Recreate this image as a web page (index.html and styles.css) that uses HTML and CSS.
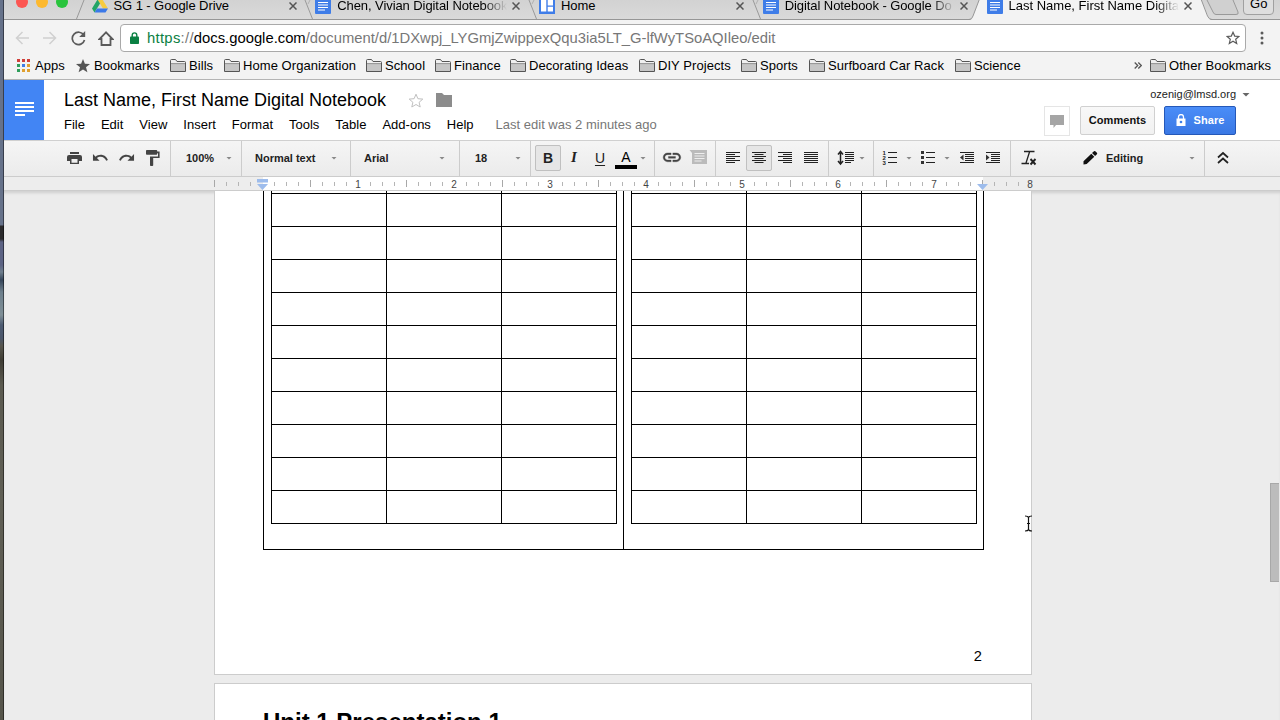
FILE: index.html
```html
<!DOCTYPE html>
<html lang="en">
<head>
  <meta charset="UTF-8" />
  <meta name="viewport" content="width=device-width, initial-scale=1.0">
  <title>Last Name, First Name Digital Notebook</title>
  <link rel="stylesheet" href="styles.css">
</head>
<body>
  <!-- Shared icons -->
  <svg class="sprite" aria-hidden="true">
    <symbol id="docs" viewBox="0 0 16 16">
      <rect width="16" height="16" rx="1" fill="#3f7de8"/>
      <path d="M3 4.5h10M3 7h10M3 9.5h10M3 12h7" stroke="#fff" stroke-width="1.2"/>
    </symbol>
    <symbol id="close" viewBox="0 0 8 8">
      <path d="M.5.5l7 7M7.5.5l-7 7" stroke="#555" stroke-width="1.5"/>
    </symbol>
    <symbol id="folder" viewBox="0 0 16 13">
      <path d="M.5 12.5V1.5q0-1 1-1h4l1.5 2h7.5q1 0 1 1v9z" fill="#f0f0f0" stroke="#555"/>
      <path d="M1 5h14v7H1z" fill="#c6c6c6"/>
      <path d="M1 4.6h14" stroke="#777" stroke-width=".8"/>
    </symbol>
  </svg>

  <div class="desktop"></div>
  <div class="window">

    <div class="tabstrip">
      <svg class="tab-edges" viewBox="4 0 1276 20">
        <path d="M4 19.5H1280" stroke="#969696"/>
        <g fill="none" stroke="#999">
          <path d="M84 0L76.500 19M305 0L312.500 19M529 0L536.500 19M753 0L760.500 19"/>
          <path d="M310 0l-2 4M534 0l-2 4M758 0l-2 4" stroke="#b0b0b0"/>
          <path d="M1207 0l6 12q1 2.500 3 2.500h20q3 0 2-2.500L1233 0" fill="#d0d0d0"/>
        </g>
        <path d="M979.500 -1L973 16q-1 4-4 4h243q-3 0-4-4L1201-1z" fill="#f3f3f3"/>
        <path d="M979.500 -1L973 16q-1 3.500-4 3.500M1201-1l6.500 17q1.500 3.500 4.500 3.500" fill="none" stroke="#969696"/>
      </svg>
      <div class="lights"><i class="red"></i><i class="yellow"></i><i class="green"></i></div>
      <div class="tab">
        <svg width="16" height="16" viewBox="0 0 16 16">
          <path d="M5.500 1.500h5L16 10.500h-5z" fill="#f7cb3e"/>
          <path d="M5.500 1.500L0 10.500l2.500 4L8 5.500z" fill="#23a566"/>
          <path d="M5 10.500h11l-2.500 4h-11z" fill="#3b79e8"/>
        </svg>
        <span>SG 1 - Google Drive</span>
        <svg class="x"><use href="#close"/></svg>
      </div>
      <div class="tab fade">
        <svg width="16" height="16"><use href="#docs"/></svg>
        <span>Chen, Vivian Digital Notebook</span>
        <svg class="x"><use href="#close"/></svg>
      </div>
      <div class="tab">
        <svg width="16" height="16" viewBox="0 0 16 16">
          <rect width="16" height="16" fill="#3f7de8"/>
          <path d="M2 2h5.300v11.500H2zM8.700 2H14v5.500H8.700zM8.700 8.700H14v4.800H8.700z" fill="#fff"/>
        </svg>
        <span>Home</span>
        <svg class="x"><use href="#close"/></svg>
      </div>
      <div class="tab fade">
        <svg width="16" height="16"><use href="#docs"/></svg>
        <span>Digital Notebook - Google Do</span>
        <svg class="x"><use href="#close"/></svg>
      </div>
      <div class="tab fade active">
        <svg width="16" height="16"><use href="#docs"/></svg>
        <span>Last Name, First Name Digital</span>
        <svg class="x"><use href="#close"/></svg>
      </div>
      <div class="profile">Go</div>
    </div>

    <div class="navbar">
      <svg class="nav-icon" width="14" height="14" viewBox="0 0 14 14"><path d="M14 7H1.500M7.500 1L1.500 7l6 6" stroke="#d0d0d0" stroke-width="1.500"/></svg>
      <svg class="nav-icon" width="14" height="14" viewBox="0 0 14 14"><path d="M0 7h12.500M6.500 1l6 6-6 6" stroke="#d0d0d0" stroke-width="1.500"/></svg>
      <svg class="nav-icon" width="15" height="15" viewBox="0 0 15 15"><path d="M12.800 4.200A6.200 6.200 0 1 0 13.500 9" stroke="#5a5a5a" stroke-width="1.700"/><path d="M14.200 0v6H8.200z" fill="#5a5a5a"/></svg>
      <svg class="nav-icon" width="16" height="15" viewBox="0 0 16 15"><path d="M8 1.400L1.500 8H3.500v6h9V8h2z" stroke="#5a5a5a" stroke-width="1.800"/></svg>
      <div class="omnibox">
        <svg width="9" height="12" viewBox="0 0 9 12"><rect y="4.500" width="9" height="7.500" rx=".8" fill="#0b8043"/><path d="M2.200 5V3.200a2.300 2.300 0 0 1 4.600 0V5" fill="none" stroke="#0b8043" stroke-width="1.400"/></svg>
        <div class="url"><span class="scheme">https</span><span class="sep">://</span><span class="host">docs.google.com</span>/document/d/1DXwpj_LYGmjZwippexQqu3ia5LT_G-lfWyTSoAQIleo/edit</div>
        <svg class="fav" width="14" height="14" viewBox="0 0 14 14"><path d="M7 1.300l1.700 3.800 4.200.4-3.200 2.800 1 4.100L7 10.200l-3.700 2.200 1-4.100L1.100 5.500l4.200-.4z" fill="none" stroke="#5a5a5a" stroke-width="1.200"/></svg>
      </div>
      <svg class="more" width="4" height="14" viewBox="0 0 4 14"><circle cx="2" cy="2" r="1.500"/><circle cx="2" cy="7" r="1.500"/><circle cx="2" cy="12" r="1.500"/></svg>
    </div>

    <div class="bookmarks">
      <a class="apps"><svg width="13" height="13" viewBox="0 0 13 13">
        <path d="M0 0h3v3H0zM5 0h3v3H5zM10 0h3v3h-3z" fill="#d0403a"/>
        <path d="M0 5h3v3H0z" fill="#2f9e5b"/><path d="M5 5h3v3H5z" fill="#3f7de8"/><path d="M10 5h3v3h-3z" fill="#e0a030"/>
        <path d="M0 10h3v3H0z" fill="#2f9e5b"/><path d="M5 10h3v3H5zM10 10h3v3h-3z" fill="#e0a030"/>
      </svg>Apps</a>
      <a class="starred"><svg width="14" height="14" viewBox="0 0 14 14"><path d="M7 0l1.900 4.800 5.100.3-4 3.200 1.400 5L7 10.500l-4.400 2.800 1.400-5-4-3.200 5.100-.3z" fill="#555"/></svg>Bookmarks</a>
      <a><svg width="16" height="13"><use href="#folder"/></svg>Bills</a>
      <a><svg width="16" height="13"><use href="#folder"/></svg>Home Organization</a>
      <a><svg width="16" height="13"><use href="#folder"/></svg>School</a>
      <a><svg width="16" height="13"><use href="#folder"/></svg>Finance</a>
      <a><svg width="16" height="13"><use href="#folder"/></svg>Decorating Ideas</a>
      <a><svg width="16" height="13"><use href="#folder"/></svg>DIY Projects</a>
      <a><svg width="16" height="13"><use href="#folder"/></svg>Sports</a>
      <a><svg width="16" height="13"><use href="#folder"/></svg>Surfboard Car Rack</a>
      <a><svg width="16" height="13"><use href="#folder"/></svg>Science</a>
      <svg width="8" height="7" viewBox="0 0 8 7"><path d="M.7.500l3 3-3 3M4.300.500l3 3-3 3" fill="none" stroke="#555" stroke-width="1.300"/></svg>
      <a><svg width="16" height="13"><use href="#folder"/></svg>Other Bookmarks</a>
    </div>

    <header class="doc-header">
      <div class="doc-home">
        <svg width="19" height="14" viewBox="0 0 19 14"><path d="M0 1h19M0 5h19M0 9h19M0 13h10" stroke="#fff" stroke-width="1.800"/></svg>
      </div>
      <div class="doc-info">
        <div class="title-row">
          <h1>Last Name, First Name Digital Notebook</h1>
          <svg class="title-star" width="16" height="15" viewBox="0 0 16 15"><path d="M8 1.200l1.900 4.500 4.900.4-3.700 3.200 1.100 4.700L8 11.500 3.800 14l1.100-4.700L1.200 6.100l4.900-.4z" fill="none" stroke="#c0c0c0"/></svg>
          <svg width="16" height="14" viewBox="0 0 16 14"><path d="M0 0h6l2 2h8v12H0z" fill="#8c8c8c"/></svg>
        </div>
        <nav class="menu">
          <span>File</span><span>Edit</span><span>View</span><span>Insert</span><span>Format</span><span>Tools</span><span>Table</span><span>Add-ons</span><span>Help</span><span class="saved">Last edit was 2 minutes ago</span>
        </nav>
      </div>
      <div class="account">
        <div class="email">ozenig@lmsd.org <i class="caret dark"></i></div>
        <div class="actions">
          <div class="chat"><svg width="14" height="13" viewBox="0 0 14 13"><path d="M0 0h14v10H6l-2.500 3v-3H0z" fill="#a5a5a5"/></svg></div>
          <button class="btn">Comments</button>
          <button class="btn share">
            <svg width="10" height="12" viewBox="0 0 10 12"><path d="M.5 4.500h9V12h-9z" fill="#fff"/><path d="M2.500 5V3a2.500 2.500 0 0 1 5 0v2" fill="none" stroke="#fff" stroke-width="1.300"/><circle cx="5" cy="8" r="1.300" fill="#3d7fe8"/></svg>
            Share
          </button>
        </div>
      </div>
    </header>

    <div class="toolbar">
      <div class="group g-main">
        <svg class="ic" viewBox="0 0 26 26"><path d="M9 7h9v2H9zM8 10h11q2 0 2 2v4h-3v3H9v-3H6v-4q0-2 2-2zm2.500 4v3.700h6V14z" fill="#444" fill-rule="evenodd"/></svg>
        <svg class="ic" viewBox="0 0 26 26"><path transform="translate(4.500 4) scale(.73)" d="M12.500 8c-2.650 0-5.050.99-6.900 2.600L2 7v9h9l-3.620-3.620c1.390-1.160 3.160-1.880 5.120-1.880 3.540 0 6.550 2.310 7.600 5.500l2.370-.78C21.080 11.030 17.150 8 12.500 8z" fill="#444"/></svg>
        <svg class="ic" viewBox="0 0 26 26"><path transform="translate(22.500 4) scale(-.73 .73)" d="M12.500 8c-2.650 0-5.050.99-6.900 2.600L2 7v9h9l-3.620-3.620c1.390-1.160 3.160-1.880 5.120-1.880 3.540 0 6.550 2.310 7.600 5.500l2.370-.78C21.080 11.030 17.150 8 12.500 8z" fill="#444"/></svg>
        <svg class="ic" viewBox="0 0 26 26"><path transform="translate(3.800 3.400) scale(.8)" d="M18 4V3c0-.55-.45-1-1-1H5c-.55 0-1 .45-1 1v4c0 .55.450 1 1 1h12c.55 0 1-.45 1-1V6h1v4H9v11c0 .55.450 1 1 1h2c.55 0 1-.45 1-1v-9h8V4h-3z" fill="#444"/></svg>
      </div>
      <div class="group drop g-zoom">100%<i class="caret"></i></div>
      <div class="group drop g-style">Normal text<i class="caret"></i></div>
      <div class="group drop g-font">Arial<i class="caret"></i></div>
      <div class="group drop g-size">18<i class="caret"></i></div>
      <div class="group g-text">
        <span class="ic on letter bold">B</span>
        <span class="ic letter italic">I</span>
        <span class="ic letter underline">U</span>
        <span class="ic letter color">A</span>
        <i class="caret"></i>
      </div>
      <div class="group g-insert">
        <svg class="ic" viewBox="0 0 26 26"><path transform="translate(2.400 1.800) scale(.88)" d="M3.900 12c0-1.710 1.390-3.100 3.100-3.100h4V7H7c-2.760 0-5 2.240-5 5s2.240 5 5 5h4v-1.900H7c-1.710 0-3.100-1.390-3.100-3.100zM8 13h8v-2H8v2zm9-6h-4v1.900h4c1.710 0 3.100 1.390 3.100 3.100s-1.390 3.100-3.100 3.100h-4V17h4c2.760 0 5-2.240 5-5s-2.240-5-5-5z" fill="#444" stroke="#444" stroke-width=".4"/></svg>
        <svg class="ic" viewBox="0 0 26 26"><path d="M3.500 5H21v14H6V8z" fill="#bbb"/><path d="M8.500 8.500h10M8.500 11h10M8.500 13.500h10M8.500 16h7" stroke="#eee"/></svg>
      </div>
      <div class="group g-align">
        <svg class="ic" viewBox="0 0 26 26"><path d="M6 7.500h14M6 9.500h9M6 11.500h14M6 13.500h9M6 15.500h14M6 17.500h9"/></svg>
        <svg class="ic on" viewBox="0 0 26 26"><path d="M6 7.500h14M8.500 9.500h9M6 11.500h14M8.500 13.500h9M6 15.500h14M8.500 17.500h9"/></svg>
        <svg class="ic" viewBox="0 0 26 26"><path d="M6 7.500h14M11 9.500h9M6 11.500h14M11 13.500h9M6 15.500h14M11 17.500h9"/></svg>
        <svg class="ic" viewBox="0 0 26 26"><path d="M6 7.500h14M6 9.500h14M6 11.500h14M6 13.500h14M6 15.500h14M6 17.500h14"/></svg>
      </div>
      <div class="group g-spacing">
        <svg class="ic" viewBox="0 0 26 26"><path d="M12 7.500h9M12 9.500h9M12 11.500h9M12 13.500h9M12 15.500h9M12 17.500h6"/><path d="M7.500 8v10M5 9.500l2.500-3 2.500 3M5 16l2.500 3 2.500-3" fill="none" stroke-width="1.500"/></svg>
        <i class="caret"></i>
      </div>
      <div class="group g-lists">
        <svg class="ic" viewBox="0 0 26 26"><path d="M11 7.500h9M11 12.500h9M11 17.500h9"/><g class="num"><text x="5.500" y="10">1</text><text x="5.500" y="15">2</text><text x="5.500" y="20">3</text></g></svg>
        <i class="caret"></i>
        <svg class="ic" viewBox="0 0 26 26"><path d="M11 7.500h9M11 12.500h9M11 17.500h9"/><path d="M6 6h3v3H6zM6 11h3v3H6zM6 16h3v3H6z" class="solid"/></svg>
        <i class="caret"></i>
        <svg class="ic outdent" viewBox="0 0 26 26"><path d="M6 7.500h14M11 9.500h9M11 11.500h9M11 13.500h9M11 15.500h9M6 17.500h14"/><path d="M9.500 9.500v6L6 12.500z" class="solid"/></svg>
        <svg class="ic" viewBox="0 0 26 26"><path d="M6 7.500h14M11 9.500h9M11 11.500h9M11 13.500h9M11 15.500h9M6 17.500h14"/><path d="M6 9.500v6l3.500-3z" class="solid"/></svg>
      </div>
      <div class="group g-mode">
        <svg class="ic" viewBox="0 0 26 26"><path d="M8 6.500h10.500M13.500 7l-3.500 11M5.500 18.500h7.500" stroke-width="1.300"/><path d="M14.500 14l5 5.500M19.500 14l-5 5.500" stroke-width="1.900"/></svg>
        <svg class="ic pencil" viewBox="0 0 26 26"><path d="M6.500 19.500v-3.200l7.800-7.600 3 3-7.600 7.300zM15 8l2-1.700q.8-.6 1.600.1l1.300 1.400q.7.800 0 1.500L18.100 11z" fill="#111" stroke="none"/></svg>
        <b>Editing</b>
        <i class="caret"></i>
      </div>
      <svg class="ic collapse" viewBox="0 0 26 26"><path d="M8 12.500l5-4.500 5 4.500M8 18l5-4.500 5 4.500" fill="none" stroke-width="1.700"/></svg>
    </div>

    <svg class="ruler" viewBox="4 0 1276 14">
      <defs>
        <pattern id="ticks" x="262" y="0" width="96" height="14" patternUnits="userSpaceOnUse">
          <path d="M12.500 5v4M24.500 5v4M36.500 5v4M60.500 5v4M72.500 5v4M84.500 5v4" stroke="#b5b5b5"/>
          <path d="M48.500 3v7" stroke="#a8a8a8"/>
        </pattern>
      </defs>
      <rect x="263" width="720" height="13" fill="#fff"/>
      <rect x="215" width="814" height="13" fill="url(#ticks)"/>
      <path d="M214.500 3v7" stroke="#a8a8a8"/>
      <g class="inches">
        <text x="358" y="10.500">1</text><text x="454" y="10.500">2</text><text x="550" y="10.500">3</text><text x="646" y="10.500">4</text>
        <text x="742" y="10.500">5</text><text x="838" y="10.500">6</text><text x="934" y="10.500">7</text><text x="1030" y="10.500">8</text>
      </g>
      <path d="M4 13.500h1276" stroke="#ccc"/>
      <path d="M257 2h11v3.500h-11zM257 7h11l-5.500 6zM977 7h11l-5.500 6z" fill="#9dbcec"/>
    </svg>

    <main class="canvas">
      <section class="page">
        <div class="outer">
          <div class="half">
            <table class="grid">
              <tr><td></td><td></td><td></td></tr>
              <tr><td></td><td></td><td></td></tr>
              <tr><td></td><td></td><td></td></tr>
              <tr><td></td><td></td><td></td></tr>
              <tr><td></td><td></td><td></td></tr>
              <tr><td></td><td></td><td></td></tr>
              <tr><td></td><td></td><td></td></tr>
              <tr><td></td><td></td><td></td></tr>
              <tr><td></td><td></td><td></td></tr>
              <tr><td></td><td></td><td></td></tr>
              <tr><td></td><td></td><td></td></tr>
            </table>
          </div>
          <div class="half">
            <table class="grid">
              <tr><td></td><td></td><td></td></tr>
              <tr><td></td><td></td><td></td></tr>
              <tr><td></td><td></td><td></td></tr>
              <tr><td></td><td></td><td></td></tr>
              <tr><td></td><td></td><td></td></tr>
              <tr><td></td><td></td><td></td></tr>
              <tr><td></td><td></td><td></td></tr>
              <tr><td></td><td></td><td></td></tr>
              <tr><td></td><td></td><td></td></tr>
              <tr><td></td><td></td><td></td></tr>
              <tr><td></td><td></td><td></td></tr>
            </table>
          </div>
        </div>
        <div class="page-number">2</div>
      </section>
      <section class="page next">
        <h2>Unit 1 Presentation 1</h2>
      </section>
      <div class="thumb"></div>
      <svg class="cursor" width="9" height="17" viewBox="0 0 9 17"><path d="M1 1q3 0 3.500 1.500Q5 1 8 1M4.500 2v13M1 16q3 0 3.500-1.500Q5 16 8 16M3 8.500h3" fill="none" stroke="#111" stroke-width="1.200"/></svg>
    </main>
  </div>
</body>
</html>
```
FILE: styles.css
```css
* {
  box-sizing: border-box;
}
html, body {
  margin: 0;
  padding: 0;
  width: 1280px;
  height: 720px;
  overflow: hidden;
  font-family: "Liberation Sans", Arial, sans-serif;
  font-size: 13px;
  color: #000;
}
body {
  display: flex;
}
svg {
  flex: none;
  display: block;
}
.sprite {
  position: absolute;
  width: 0;
  height: 0;
}
.desktop {
  width: 4px;
  flex: none;
  border-right: 1px solid rgba(0, 0, 0, 0.45);
  background: linear-gradient(#66728a 0, #66728a 225px, #2b2a2c 226px, #2b2a2c 239px, #5c6384 242px, #5c6384 265px, #6f7f8e 272px, #35455a 280px, #6d7f8c 292px, #7f8f97 315px, #4d5b72 325px, #4b566a 338px, #57564d 346px, #3f3d35 360px, #5b5a50 385px, #605f55 500px, #55544a 720px);
}
.window {
  width: 1276px;
  display: flex;
  flex-direction: column;
}

/* Browser tabs */
.tabstrip {
  height: 20px;
  flex: none;
  display: flex;
  align-items: flex-end;
  position: relative;
  background: linear-gradient(#d2d2d2, #dadada);
}
.tab-edges {
  position: absolute;
  inset: 0;
  width: 1276px;
  height: 20px;
}
.lights {
  position: relative;
  display: flex;
  gap: 8px;
  width: 87.5px;
  height: 24px;
  padding-left: 12px;
}
.lights i {
  width: 12px;
  height: 12px;
  border-radius: 50%;
}
.red { background: #fc5652; }
.yellow { background: #fdb92f; }
.green { background: #29c43d; }
.tab {
  position: relative;
  width: 223.75px;
  height: 28px;
  display: flex;
  align-items: center;
  gap: 6px;
  letter-spacing: -0.08px;
}
.tab span {
  width: 170px;
  padding-bottom: 1px;
  white-space: nowrap;
}
.tab.fade span {
  -webkit-mask-image: linear-gradient(90deg, #000 86%, transparent 100%);
  mask-image: linear-gradient(90deg, #000 86%, transparent 100%);
}
.tab.active span {
  letter-spacing: 0;
}
.tab .x {
  width: 8px;
  height: 8px;
  margin-left: -1px;
}
.profile {
  position: relative;
  width: 31px;
  height: 24px;
  margin: 0 0 5px 33px;
  border: 1px solid #a0a0a0;
  border-radius: 4px;
  background: #dedede;
  line-height: 23px;
  text-align: center;
}

/* Address bar */
.navbar {
  height: 35px;
  flex: none;
  display: flex;
  align-items: center;
  padding: 1px 0 0 11px;
  background: #f3f3f3;
}
.nav-icon {
  fill: none;
  margin-right: 14px;
}
.nav-icon:nth-child(3) { margin-right: 12px; }
.nav-icon:nth-child(4) { margin-right: 6px; }
.omnibox {
  width: 1126px;
  height: 28px;
  display: flex;
  align-items: center;
  border: 1px solid #a9a9a9;
  border-radius: 4px;
  background: #fff;
  padding: 0 5px 0 9px;
}
.url {
  flex: 1;
  margin-left: 8px;
  font-size: 14.8px;
  color: #777;
  white-space: nowrap;
}
.scheme { color: #0b8043; }
.scheme, .sep { letter-spacing: 0.3px; }
.host { color: #000; }
.more {
  margin-left: 14px;
  fill: #5a5a5a;
}

/* Bookmarks bar */
.bookmarks {
  height: 25px;
  flex: none;
  display: grid;
  grid-template-columns: 59px 94px 54px 142px 69px 75px 129px 102px 68px 146px 179px 16px 1fr;
  align-items: center;
  padding: 0 0 3px 13px;
  border-bottom: 1px solid #b4b4b4;
  background: #f3f3f3;
  letter-spacing: 0.06px;
}
.bookmarks a {
  display: flex;
  align-items: center;
  gap: 3px;
  white-space: nowrap;
}
.bookmarks a.apps { gap: 5px; }
.bookmarks a.starred { gap: 4px; }

/* Document header */
.doc-header {
  height: 60px;
  flex: none;
  display: flex;
  background: #fff;
}
.doc-home {
  width: 40px;
  background: #4285f4;
  display: flex;
  justify-content: center;
  padding-top: 22px;
}
.doc-info {
  flex: 1;
  padding: 9px 0 0 20px;
}
.title-row {
  display: flex;
  align-items: center;
  height: 22px;
}
h1 {
  margin: 0;
  width: 344px;
  font-size: 18px;
  font-weight: normal;
  line-height: 22px;
  white-space: nowrap;
}
.title-star {
  margin-right: 12px;
}
.menu {
  display: flex;
  gap: 16px;
  margin-top: 5px;
  line-height: 18px;
  white-space: nowrap;
}
.saved {
  color: #777;
  margin-left: 6px;
}
.account {
  width: 240px;
  display: flex;
  flex-direction: column;
  align-items: flex-end;
}
.email {
  display: flex;
  align-items: center;
  gap: 6px;
  margin: 8px 30px 0 0;
  font-size: 11px;
  line-height: 13px;
  color: #222;
}
.caret {
  flex: none;
  width: 6px;
  height: 3px;
  background: #888;
  clip-path: polygon(0 0, 100% 0, 50% 100%);
}
.caret.dark {
  width: 8px;
  height: 4px;
  background: #666;
}
.actions {
  display: flex;
  margin: 5px 44px 0 0;
}
.chat {
  width: 26px;
  height: 30px;
  margin-right: 10px;
  border: 1px solid #e5e5e5;
  display: flex;
  align-items: center;
  justify-content: center;
}
.btn {
  width: 75px;
  height: 29px;
  padding: 0 0 1px;
  border: 1px solid #d0d0d0;
  border-radius: 2px;
  background: linear-gradient(#f8f8f8, #f1f1f1);
  font: bold 11px "Liberation Sans", Arial, sans-serif;
  letter-spacing: 0.1px;
  color: #111;
}
.share {
  width: 72px;
  margin-left: 9px;
  display: flex;
  align-items: center;
  justify-content: center;
  gap: 7px;
  padding-left: 1px;
  border-color: #2558b8;
  background: linear-gradient(#4a8df8, #3a78e4);
  color: #fff;
}

/* Formatting toolbar */
.toolbar {
  height: 37px;
  flex: none;
  display: flex;
  border-top: 1px solid #d0d0d0;
  border-bottom: 1px solid #ccc;
  background: linear-gradient(#f5f5f5, #ebebeb);
}
.toolbar .group {
  display: flex;
  align-items: center;
  padding-bottom: 1px;
  border-right: 1px solid #ccc;
  font-size: 11px;
}
.drop {
  justify-content: space-between;
  font-weight: bold;
  color: #222;
}
.ic {
  flex: none;
  width: 26px;
  height: 26px;
  stroke: #222;
  stroke-width: 1.1;
}
.g-main .ic, .g-insert .ic { stroke: none; }
.ic.on {
  background: #e6e6e6;
  outline: 1px solid #c0c0c0;
  outline-offset: -1px;
  border-radius: 2px;
}
.solid {
  fill: #333;
  stroke: none;
}
.g-main { width: 167px; padding-left: 57px; }
.g-zoom { width: 71px; padding: 0 9px 0 15px; }
.g-style { width: 109px; padding: 0 13px 0 13px; }
.g-font { width: 109px; padding: 0 14px 0 13px; }
.g-size { width: 71px; padding: 0 9px 0 15px; }
.g-text { width: 124px; padding-left: 4px; }
.g-text .caret { margin-left: 1px; }
.g-insert { width: 61px; padding-left: 4px; gap: 1px; }
.g-align { width: 113px; padding-left: 4px; }
.g-spacing { width: 45px; padding-left: 4px; }
.g-lists { width: 137px; padding-left: 3px; }
.g-lists .caret { margin: 0 3px; }
.g-lists .outdent { margin-left: 1px; }
.g-mode { width: 194px; padding: 0 9px 0 5px; }
.g-mode .pencil { margin-left: 35px; }
.g-mode b { margin-left: 3px; color: #222; }
.g-mode .caret { margin-left: auto; }
.collapse { margin: 4px 0 0 5px; }
.letter {
  font-size: 14px;
  line-height: 26px;
  text-align: center;
  color: #222;
}
.bold { font-weight: bold; }
.italic { font: italic bold 15px/25px "Liberation Serif", serif; }
.underline { text-decoration: underline; text-underline-offset: 2px; }
.color {
  position: relative;
  line-height: 24px;
  color: #000;
}
.color::after {
  content: "";
  position: absolute;
  left: 2px;
  bottom: 2px;
  width: 22px;
  height: 4px;
  background: #000;
}
.num text {
  font-size: 6px;
  font-weight: bold;
  stroke: none;
  fill: #222;
}

/* Ruler */
.ruler {
  width: 1276px;
  height: 14px;
  background: #ededed;
}
.inches text {
  font-size: 10px;
  text-anchor: middle;
  fill: #444;
}

/* Pages */
.canvas {
  position: relative;
  flex: 1;
  overflow: hidden;
  background: #ececec;
  box-shadow: inset 0 3px 3px -1px rgba(0, 0, 0, 0.12);
}
.page {
  width: 818px;
  height: 484px;
  margin-left: 210px;
  padding-left: 48px;
  background: #fff;
  border: 1px solid #ccc;
  border-top: none;
}
.outer {
  display: flex;
  width: 721px;
  height: 359px;
  border-right: 1px solid #000;
  border-bottom: 1px solid #000;
  overflow: hidden;
}
.half {
  width: 360px;
  border-left: 1px solid #000;
  padding-left: 7px;
}
.grid {
  width: 346px;
  margin-top: -31px;
  table-layout: fixed;
  border-spacing: 1px;
  background: #000;
}
.grid td {
  height: 32px;
  padding: 0;
  background: #fff;
}
.page-number {
  width: 719px;
  margin-top: 97px;
  font-size: 14.667px;
  line-height: 18px;
  text-align: right;
}
.page.next {
  height: 100px;
  margin-top: 8px;
  border-top: 1px solid #ccc;
}
h2 {
  margin: 24px 0 0;
  font-size: 24px;
  line-height: 28px;
}
.thumb {
  position: absolute;
  left: 1266px;
  top: 292px;
  width: 9px;
  height: 99px;
  background: #bcbcbc;
  border: 1px solid #a8a8a8;
  border-right: none;
}
.cursor {
  position: absolute;
  left: 1020px;
  top: 324px;
}
```
